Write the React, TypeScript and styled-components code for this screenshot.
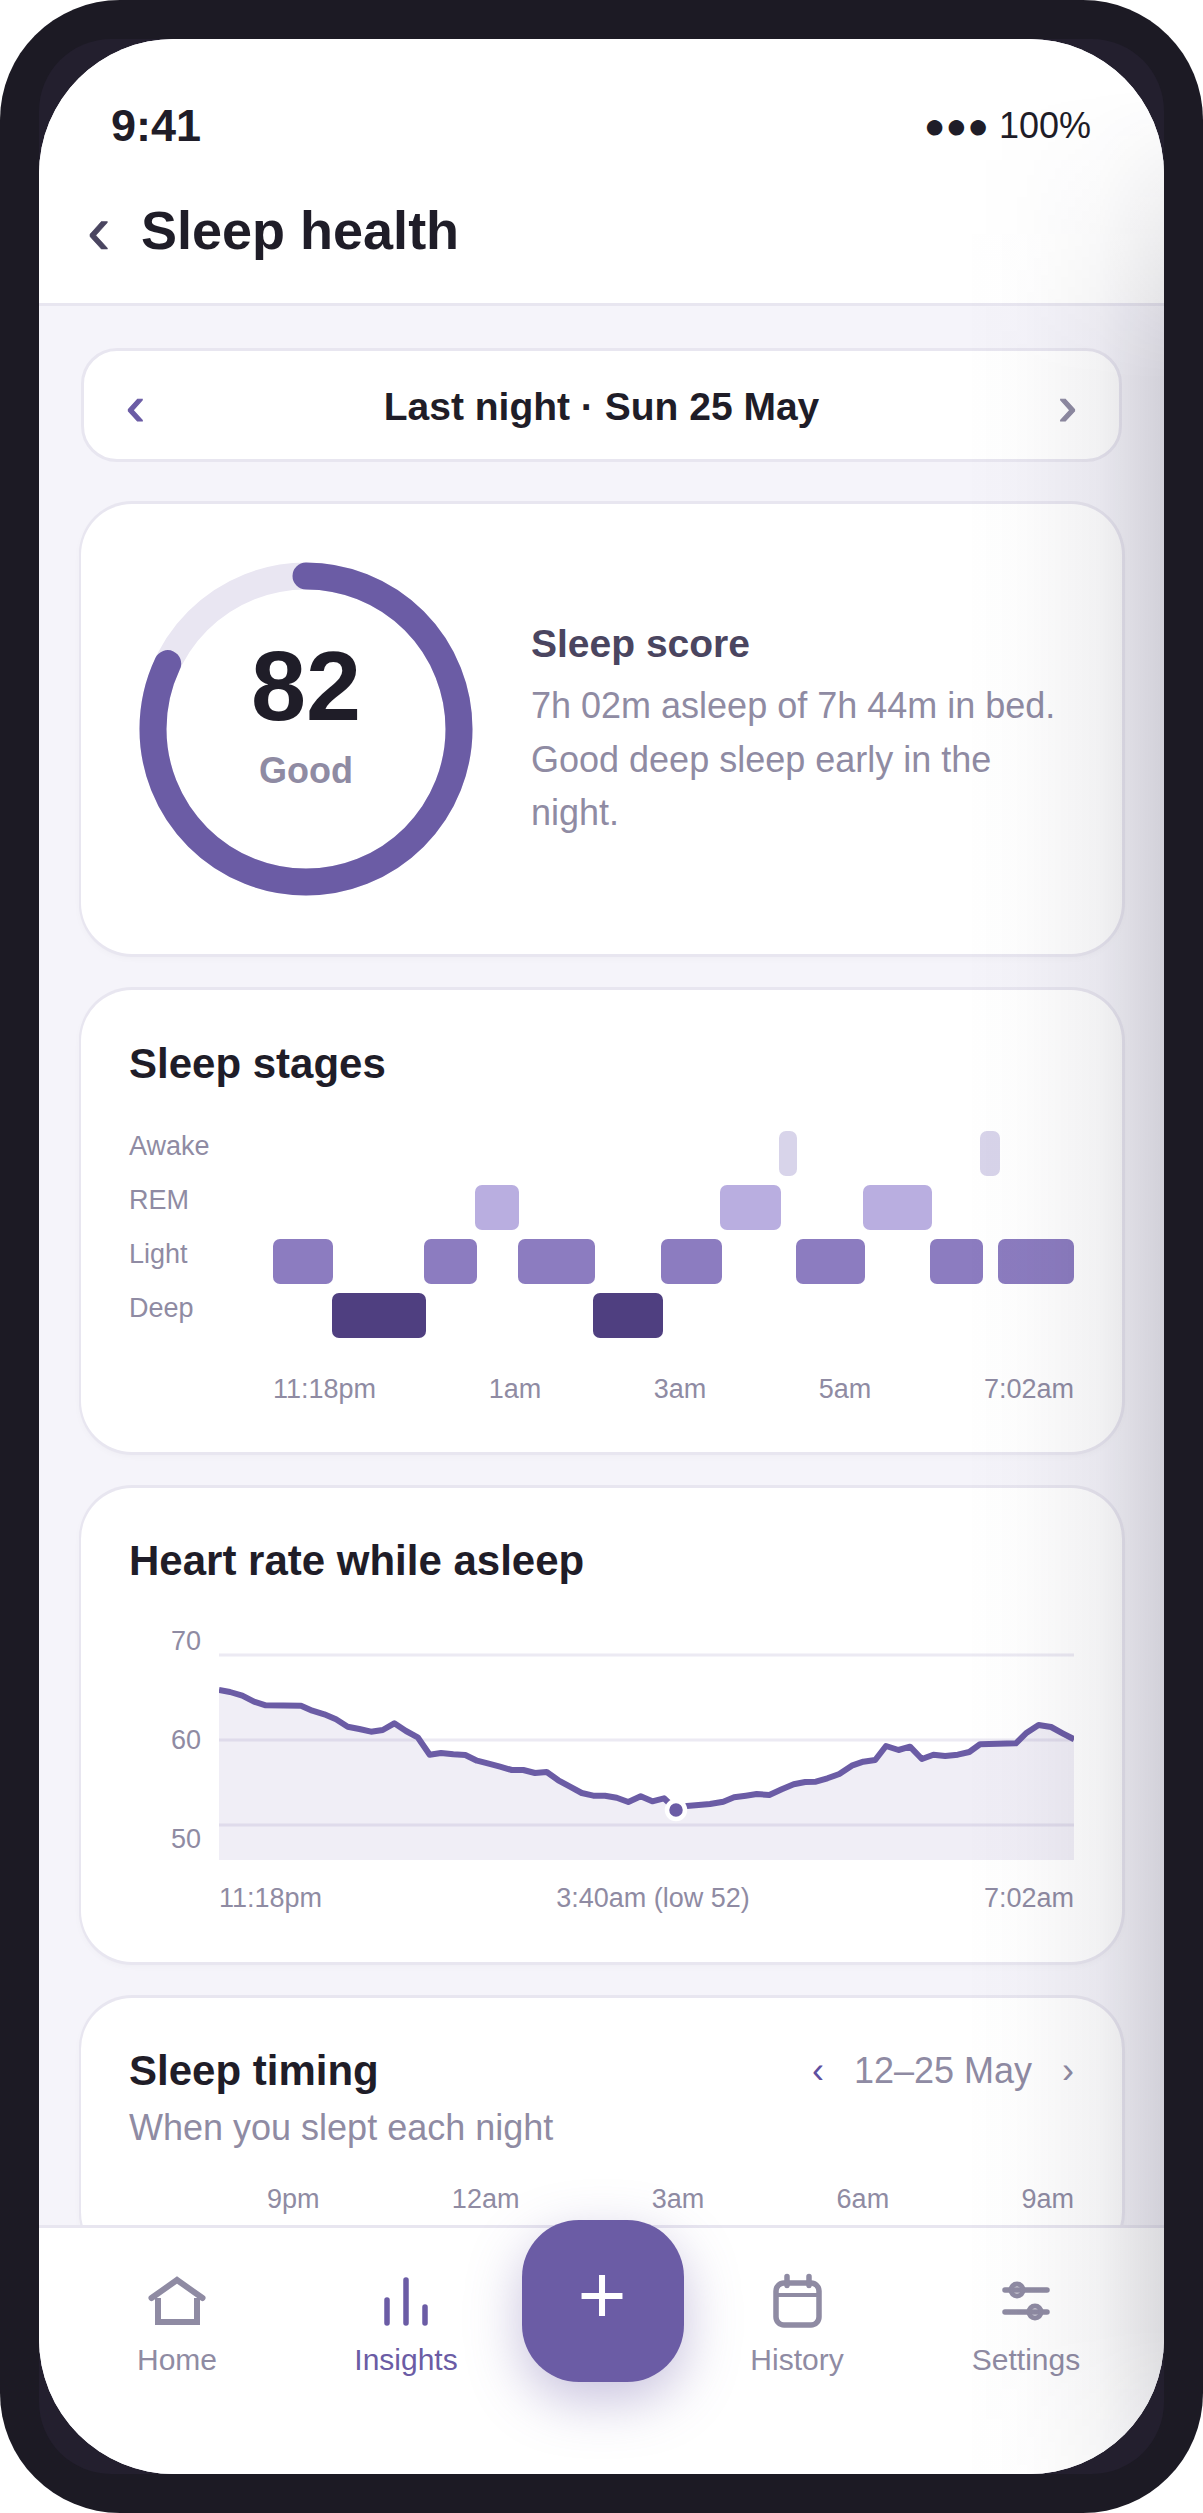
import React from "react";
import styled, { createGlobalStyle } from "styled-components";

const INK = "#1f1d28";
const MUTED = "#8f8ba3";
const BRAND = "#6b5ca5";
const LINE = "#e8e6f0";

const Global = createGlobalStyle`
  html, body { margin: 0; padding: 0; background: #fff; }
  * { box-sizing: border-box; }
  body { font-family: "Liberation Sans", Arial, sans-serif; color: ${INK}; }
`;

const Frame = styled.div`
  width: 1203px;
  height: 2513px;
  padding: 39px;
  background: #1c1a24;
  border-radius: 120px;
`;
const Bezel = styled.div`
  width: 100%;
  height: 100%;
  background: #231f2e;
  border-radius: 72px;
`;
const Screen = styled.div`
  position: relative;
  display: flex;
  flex-direction: column;
  width: 100%;
  height: 100%;
  overflow: hidden;
  background: #f5f4fa;
  border-radius: 135px;
`;
const Sheen = styled.div`
  position: absolute;
  inset: 0;
  z-index: 5;
  pointer-events: none;
  background: linear-gradient(
    to right,
    rgba(30, 28, 50, 0) 925px,
    rgba(30, 28, 50, 0.015) 985px,
    rgba(30, 28, 50, 0.06) 1060px,
    rgba(30, 28, 50, 0.16) 1125px
  );
  -webkit-mask-image: linear-gradient(to bottom, transparent 2%, black 14%, black 94%, rgba(0,0,0,0.6) 100%);
  mask-image: linear-gradient(to bottom, transparent 2%, black 14%, black 94%, rgba(0,0,0,0.6) 100%);
`;
const Header = styled.header`
  flex: none;
  background: #fff;
  border-bottom: 3px solid ${LINE};
`;
const StatusBar = styled.div`
  display: flex;
  align-items: center;
  justify-content: space-between;
  height: 54px;
  margin: 60px 73px 0 72px;
`;
const Clock = styled.span`
  font-size: 45px;
  font-weight: 700;
`;
const Signal = styled.span`
  font-size: 36px;
`;
const TitleRow = styled.div`
  display: flex;
  align-items: center;
  height: 62px;
  margin: 46px 0 42px 48px;
`;
const Chevron = styled.span<{ $size: number; $color: string; $w?: number; $stroke?: number }>`
  display: inline-block;
  flex: none;
  font-size: ${(p) => p.$size}px;
  line-height: 1;
  color: ${(p) => p.$color};
  width: ${(p) => (p.$w ? `${p.$w}px` : "auto")};
  -webkit-text-stroke: ${(p) => p.$stroke ?? 0}px ${(p) => p.$color};
`;
const Title = styled.h1`
  margin: 0;
  font-size: 54px;
  line-height: 62px;
  font-weight: 700;
`;
const Main = styled.main`
  flex: 1;
  min-height: 0;
  overflow: hidden;
  padding: 42px 42px 0;
`;
const DateNav = styled.div`
  display: flex;
  align-items: center;
  justify-content: space-between;
  height: 114px;
  padding: 1px 42px 0;
  margin-bottom: 42px;
  background: #fff;
  border: 3px solid ${LINE};
  border-radius: 36px;
`;
const DateLabel = styled.span`
  padding-top: 2px;
  font-size: 39px;
  font-weight: 700;
`;
const Card = styled.section<{ $pt: number; $pb: number }>`
  margin-bottom: 36px;
  padding: ${(p) => p.$pt}px 48px ${(p) => p.$pb}px;
  background: #fff;
  border-radius: 51px;
  box-shadow: 1px 0 0 2px ${LINE}, 0 1px 0 2px ${LINE}, 0 -1px 0 2px ${LINE}, 0 3px 9px rgba(31, 29, 40, 0.04);
`;
const ScoreCard = styled(Card)`
  display: flex;
  align-items: center;
  gap: 57px;
  padding: 57px;
`;
const Ring = styled.div`
  position: relative;
  flex: none;
  width: 336px;
  height: 336px;
`;
const RingCenter = styled.div`
  position: absolute;
  inset: 0;
  display: flex;
  flex-direction: column;
  align-items: center;
  justify-content: center;
  padding-bottom: 33px;
`;
const ScoreValue = styled.span`
  font-size: 99px;
  line-height: 102px;
  font-weight: 700;
`;
const ScoreWord = styled.span`
  margin-top: 14px;
  font-size: 36px;
  line-height: 40px;
  font-weight: 700;
  color: ${MUTED};
`;
const ScoreText = styled.div`
  flex: 1;
  padding-top: 3px;
`;
const ScoreTitle = styled.h3`
  margin: 0 0 12px;
  font-size: 39px;
  line-height: 46px;
  font-weight: 700;
  color: #4a4560;
`;
const ScoreDesc = styled.p`
  margin: 0;
  font-size: 36px;
  line-height: 53.6px;
  color: ${MUTED};
`;
const CardTitle = styled.h2`
  margin: 0;
  font-size: 42px;
  line-height: 48px;
  font-weight: 700;
`;
const StageChart = styled.div`
  display: flex;
  margin-top: 43px;
`;
const StageLabels = styled.div`
  flex: none;
  width: 144px;
`;
const StageLabel = styled.div`
  height: 54px;
  font-size: 27px;
  line-height: 31px;
  color: ${MUTED};
`;
const Axis = styled.div<{ $top: number; $left: number }>`
  display: flex;
  justify-content: space-between;
  margin-top: ${(p) => p.$top}px;
  margin-left: ${(p) => p.$left}px;
  font-size: 27px;
  line-height: 31px;
  color: ${MUTED};
`;
const HeartChart = styled.div`
  display: flex;
  margin-top: 35px;
`;
const HeartScale = styled.div`
  display: flex;
  flex: none;
  flex-direction: column;
  justify-content: space-between;
  width: 72px;
  height: 240px;
  margin-right: 18px;
  padding: 6px 0 5px;
  text-align: right;
  font-size: 27px;
  line-height: 31px;
  color: ${MUTED};
`;
const TimingHead = styled.div`
  display: flex;
  align-items: flex-start;
  justify-content: space-between;
`;
const Sub = styled.div`
  margin-top: 12px;
  font-size: 36px;
  line-height: 42px;
  color: ${MUTED};
`;
const Range = styled.div`
  display: flex;
  align-items: center;
  gap: 30px;
  height: 48px;
  font-size: 36px;
  color: ${MUTED};
`;
const Nav = styled.nav`
  position: relative;
  z-index: 1;
  flex: none;
  display: flex;
  align-items: flex-start;
  height: 249px;
  padding: 43px 0 0 69px;
  background: #fff;
  border-top: 3px solid ${LINE};
`;
const NavItem = styled.div<{ $active?: boolean; $after?: number }>`
  display: flex;
  flex: none;
  flex-direction: column;
  align-items: center;
  width: 138px;
  margin-right: ${(p) => p.$after ?? 0}px;
  color: ${(p) => (p.$active ? BRAND : MUTED)};
`;
const NavLabel = styled.span`
  margin-top: 12px;
  font-size: 30px;
  line-height: 34px;
`;
const Fab = styled.button`
  display: flex;
  flex: none;
  align-items: center;
  justify-content: center;
  width: 162px;
  height: 162px;
  margin: -51px 44px 0 47px;
  padding: 0 2px 14px 0;
  border: 0;
  border-radius: 57px;
  background: ${BRAND};
  color: #fff;
  font-family: inherit;
  font-size: 84px;
  line-height: 1;
  box-shadow: 0 18px 54px rgba(107, 92, 165, 0.38);
`;

const stages: Array<[number, number, string, number]> = [
  [0, 60, "#8c7cc0", 108],
  [151, 53, "#8c7cc0", 108],
  [245, 77, "#8c7cc0", 108],
  [388, 61, "#8c7cc0", 108],
  [523, 69, "#8c7cc0", 108],
  [657, 53, "#8c7cc0", 108],
  [725, 76, "#8c7cc0", 108],
  [59, 94, "#4f3f80", 162],
  [320, 70, "#4f3f80", 162],
  [202, 44, "#b9aee0", 54],
  [447, 61, "#b9aee0", 54],
  [590, 69, "#b9aee0", 54],
  [506, 18, "#d8d4ea", 0],
  [707, 20, "#d8d4ea", 0],
];

const leftZoom: Array<[number, number]> = [
  [57, 210], [90, 216], [127, 227], [162, 245], [197, 256], [303, 257], [337, 272], [373, 283],
  [408, 298], [443, 320], [478, 327], [513, 335], [548, 330], [583, 310], [618, 333], [653, 352],
  [689, 404], [723, 399], [760, 403], [796, 405], [831, 422], [866, 431], [900, 440], [935, 450],
  [970, 450], [1005, 459], [1040, 456], [1075, 481], [1110, 500], [1145, 519], [1180, 527],
  [1215, 527], [1250, 533], [1285, 546], [1322, 529], [1357, 544], [1392, 535], [1427, 568],
];
const rightZoom: Array<[number, number]> = [
  [130, 558], [163, 555], [195, 552], [232, 545], [262, 532], [295, 527], [325, 522], [360, 525],
  [395, 508], [428, 493], [460, 486], [490, 485], [522, 475], [555, 462], [590, 437], [622, 425],
  [655, 420], [685, 378], [720, 390], [752, 380], [785, 417], [817, 404], [850, 408], [885, 404],
  [917, 396], [947, 373], [1047, 370], [1077, 338], [1110, 315], [1145, 321], [1177, 340], [1209, 358],
];
const heartPts = [
  ...leftZoom.map(([x, y]) => [x / 3 - 19, y / 3]),
  ...rightZoom.map(([x, y]) => [x / 2.785 + 421, y / 3]),
].map(([x, y]) => `${x.toFixed(1)},${y.toFixed(1)}`);

const C = 2 * Math.PI * 153;

export default function App() {
  return (
    <>
      <Global />
      <Frame>
        <Bezel>
          <Screen>
            <Header>
              <StatusBar>
                <Clock>9:41</Clock>
                <Signal>●●● 100%</Signal>
              </StatusBar>
              <TitleRow>
                <Chevron $size={70} $color="#4a4560" $w={54} $stroke={0.6}>‹</Chevron>
                <Title>Sleep health</Title>
              </TitleRow>
            </Header>
            <Main>
              <DateNav>
                <Chevron $size={56} $color={BRAND} $stroke={1.2}>‹</Chevron>
                <DateLabel>Last night · Sun 25 May</DateLabel>
                <Chevron $size={56} $color={MUTED} $stroke={1.2}>›</Chevron>
              </DateNav>
              <ScoreCard $pt={57} $pb={57}>
                <Ring>
                  <svg width="336" height="336" viewBox="0 0 336 336">
                    <circle cx="168" cy="168" r="153" fill="none" stroke="#e9e6f2" strokeWidth="27" />
                    <circle
                      cx="168"
                      cy="168"
                      r="153"
                      fill="none"
                      stroke={BRAND}
                      strokeWidth="27"
                      strokeLinecap="round"
                      strokeDasharray={`${C * 0.82} ${C}`}
                      transform="rotate(-90 168 168)"
                    />
                  </svg>
                  <RingCenter>
                    <ScoreValue>82</ScoreValue>
                    <ScoreWord>Good</ScoreWord>
                  </RingCenter>
                </Ring>
                <ScoreText>
                  <ScoreTitle>Sleep score</ScoreTitle>
                  <ScoreDesc>7h 02m asleep of 7h 44m in bed. Good deep sleep early in the night.</ScoreDesc>
                </ScoreText>
              </ScoreCard>
              <Card $pt={50} $pb={47}>
                <CardTitle>Sleep stages</CardTitle>
                <StageChart>
                  <StageLabels>
                    <StageLabel>Awake</StageLabel>
                    <StageLabel>REM</StageLabel>
                    <StageLabel>Light</StageLabel>
                    <StageLabel>Deep</StageLabel>
                  </StageLabels>
                  <svg width="801" height="216" viewBox="0 0 801 216">
                    {stages.map(([x, w, c, y]) => (
                      <rect key={`${x}-${y}`} x={x} y={y} width={w} height="45" rx="7" fill={c} />
                    ))}
                  </svg>
                </StageChart>
                <Axis $top={27} $left={144}>
                  <span>11:18pm</span>
                  <span>1am</span>
                  <span>3am</span>
                  <span>5am</span>
                  <span>7:02am</span>
                </Axis>
              </Card>
              <Card $pt={49} $pb={48}>
                <CardTitle>Heart rate while asleep</CardTitle>
                <HeartChart>
                  <HeartScale>
                    <span>70</span>
                    <span>60</span>
                    <span>50</span>
                  </HeartScale>
                  <svg width="855" height="240" viewBox="0 0 855 240">
                    {[35, 120, 205].map((y) => (
                      <line key={y} x1="0" x2="855" y1={y} y2={y} stroke="#eceaf3" strokeWidth="3" />
                    ))}
                    <polygon points={`0,240 ${heartPts.join(" ")} 855,240`} fill={BRAND} fillOpacity="0.1" />
                    <polyline points={heartPts.join(" ")} fill="none" stroke={BRAND} strokeWidth="6" strokeLinejoin="round" />
                    <circle cx="457" cy="190" r="9" fill={BRAND} stroke="#fff" strokeWidth="4.5" />
                  </svg>
                </HeartChart>
                <Axis $top={23} $left={90}>
                  <span>11:18pm</span>
                  <span>3:40am (low 52)</span>
                  <span>7:02am</span>
                </Axis>
              </Card>
              <Card $pt={49} $pb={48}>
                <TimingHead>
                  <div>
                    <CardTitle>Sleep timing</CardTitle>
                    <Sub>When you slept each night</Sub>
                  </div>
                  <Range>
                    <Chevron $size={36} $color="#5f4fa0">‹</Chevron>
                    <span>12–25 May</span>
                    <Chevron $size={36} $color={MUTED}>›</Chevron>
                  </Range>
                </TimingHead>
                <Axis $top={35} $left={138}>
                  <span>9pm</span>
                  <span>12am</span>
                  <span>3am</span>
                  <span>6am</span>
                  <span>9am</span>
                </Axis>
              </Card>
            </Main>
            <Nav>
              <NavItem $after={91}>
                <svg width="60" height="60" viewBox="0 0 60 60" fill="none" stroke="currentColor" strokeWidth="6" strokeLinecap="round" strokeLinejoin="miter">
                  <path d="M4.5 27 30 9l25.5 18" />
                  <path d="M11 27v24h39V27" strokeLinecap="butt" />
                </svg>
                <NavLabel>Home</NavLabel>
              </NavItem>
              <NavItem $active>
                <svg width="60" height="60" viewBox="0 0 60 60" fill="none" stroke="currentColor" strokeWidth="5.5" strokeLinecap="round">
                  <path d="M11 29v23M30 9v43M49 36v16" />
                </svg>
                <NavLabel>Insights</NavLabel>
              </NavItem>
              <Fab aria-label="Add">+</Fab>
              <NavItem $after={91}>
                <svg width="60" height="60" viewBox="0 0 60 60" fill="none" stroke="currentColor" strokeWidth="5.5" strokeLinecap="round">
                  <rect x="9" y="12" width="43" height="42" rx="8" />
                  <path d="M9 24h43" strokeWidth="4" />
                  <path d="M20 5.500v9M42 5.500v9" />
                </svg>
                <NavLabel>History</NavLabel>
              </NavItem>
              <NavItem>
                <svg width="60" height="60" viewBox="0 0 60 60" fill="none" stroke="currentColor" strokeWidth="5.5" strokeLinecap="round">
                  <path d="M9 19h42M9 41h42" />
                  <circle cx="21" cy="19" r="6" strokeWidth="5" />
                  <circle cx="39" cy="41" r="6" strokeWidth="5" />
                </svg>
                <NavLabel>Settings</NavLabel>
              </NavItem>
            </Nav>
            <Sheen />
          </Screen>
        </Bezel>
      </Frame>
    </>
  );
}
